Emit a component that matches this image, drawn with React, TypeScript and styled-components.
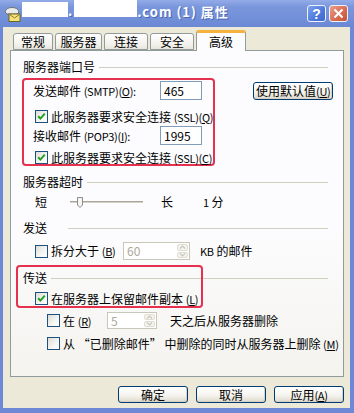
import React from 'react';
import styled, { createGlobalStyle } from 'styled-components';

const GlobalStyle = createGlobalStyle`
  html, body { margin: 0; padding: 0; background: #fff; }
  body {
    font-family: "Noto Sans CJK SC", "Noto Sans", sans-serif;
    font-size: 12px;
    color: #000;
  }
  u { text-underline-offset: 1px; }
`;

const Window = styled.div`
  width: 354px;
  height: 413px;
  display: flex;
  flex-direction: column;
  overflow: hidden;
`;

const TitleBar = styled.div`
  height: 27px;
  flex: none;
  display: flex;
  align-items: flex-start;
  padding: 0 6px 0 4px;
  box-sizing: border-box;
  background: linear-gradient(#93abe8, #7a97dc 25%, #6f8dd7 80%, #6a88d3);
`;

const TitleIcon = styled.svg`
  margin-top: 5px;
  flex: none;
`;

const Blank = styled.span<{ $w: number; $h: number; $top: number }>`
  display: block;
  width: ${p => p.$w}px;
  height: ${p => p.$h}px;
  margin-top: ${p => p.$top}px;
  margin-left: 1px;
  background: #fff;
`;

const TitleText = styled.span<{ $top?: number }>`
  margin-top: ${p => p.$top ?? 5}px;
  color: #fff;
  font-weight: bold;
  font-size: 13px;
  letter-spacing: 1px;
  line-height: 14px;
  white-space: pre;
  text-shadow: 1px 1px 0 #4a66b8;
`;

const Controls = styled.div`
  margin-left: auto;
  margin-top: 5px;
  display: flex;
  gap: 3px;
`;

const CapButton = styled.div<{ $kind: 'help' | 'close' }>`
  width: 19px;
  height: 17px;
  box-sizing: border-box;
  border: 1px solid #eef2fb;
  border-radius: 3px;
  display: flex;
  align-items: center;
  justify-content: center;
  color: #fff;
  font-family: "Liberation Sans", sans-serif;
  font-weight: bold;
  font-size: 14px;
  background: ${p =>
    p.$kind === 'help'
      ? 'linear-gradient(135deg, #7fa2ee, #4d78dc 60%, #3c66cc)'
      : 'linear-gradient(135deg, #ea9e8c, #d8694f 60%, #c65238)'};
`;

const Frame = styled.div`
  flex: 1;
  display: flex;
  flex-direction: column;
  background: #ece9d8;
  border-left: 3px solid #6c88d6;
  border-right: 4px solid #6c88d6;
  border-bottom: 5px solid #6c88d6;
`;

const TabRow = styled.div`
  height: 23px;
  display: flex;
  align-items: flex-end;
  padding-left: 10px;
`;

const Tab = styled.div<{ $w: number; $active?: boolean }>`
  width: ${p => p.$w}px;
  height: ${p => (p.$active ? 21 : 17)}px;
  box-sizing: border-box;
  margin-right: 2px;
  margin-bottom: ${p => (p.$active ? -1 : 0)}px;
  position: relative;
  z-index: ${p => (p.$active ? 2 : 0)};
  border: 1px solid #919b9c;
  border-bottom: ${p => (p.$active ? 'none' : '1px solid #919b9c')};
  border-top: ${p => (p.$active ? '3px solid #f5b33d' : '1px solid #919b9c')};
  border-radius: 3px 3px 0 0;
  background: ${p => (p.$active ? '#fcfcfe' : 'linear-gradient(#fefefe, #f2f1ec 70%, #e8e6dc)')};
  display: flex;
  align-items: center;
  justify-content: center;
  line-height: 12px;
`;

const Panel = styled.div`
  position: relative;
  margin-left: 7px;
  width: 334px;
  height: 327px;
  box-sizing: border-box;
  border: 1px solid #919b9c;
  background: linear-gradient(#fcfcfe, #fcfcfe 55%, #f4f3ee);
  padding: 10px 15px 0 12px;
  display: flex;
  flex-direction: column;
`;

const Legend = styled.div<{ $top: number; $gap?: number }>`
  display: flex;
  align-items: center;
  height: 12px;
  line-height: 12px;
  margin-top: ${p => p.$top}px;
  white-space: nowrap;
  &::after {
    content: '';
    flex: 1;
    margin-left: ${p => p.$gap ?? 4}px;
    border-top: 1px solid #d0d0bf;
  }
`;

const PortGroup = styled.div`
  display: flex;
  align-items: flex-start;
  margin-top: 5px;
`;

const Highlight = styled.div`
  margin-left: -1px;
  width: 194px;
  height: 88px;
  box-sizing: border-box;
  border: 2px solid #e5304e;
  border-radius: 4px;
  padding-left: 9px;
  display: flex;
  flex-direction: column;
`;

const Overlay = styled.div<{ $left: number; $top: number; $w: number; $h: number }>`
  position: absolute;
  left: ${p => p.$left}px;
  top: ${p => p.$top}px;
  width: ${p => p.$w}px;
  height: ${p => p.$h}px;
  box-sizing: border-box;
  border: 2px solid #e5304e;
  border-radius: 4px;
  pointer-events: none;
`;

const Row = styled.div<{ $h: number; $top: number; $indent?: number }>`
  display: flex;
  align-items: center;
  height: ${p => p.$h}px;
  margin-top: ${p => p.$top}px;
  padding-left: ${p => p.$indent ?? 0}px;
  white-space: nowrap;
  line-height: 12px;
`;

const Label = styled.span<{ $w?: number; $gap?: number }>`
  display: inline-block;
  width: ${p => (p.$w ? `${p.$w}px` : 'auto')};
  margin-left: ${p => p.$gap ?? 0}px;
  flex: none;
`;

// narrower Latin run inside Chinese labels, like the bitmap half-width glyphs
const Lat = styled.span`
  font-size: 11px;
  letter-spacing: -0.3px;
`;

const TextBox = styled.div`
  width: 42px;
  height: 19px;
  box-sizing: border-box;
  border: 1px solid #7f9db9;
  background: #fff;
  padding-left: 3px;
  display: flex;
  align-items: center;
  line-height: 12px;
`;

const Box = styled.span`
  width: 13px;
  height: 13px;
  box-sizing: border-box;
  border: 1px solid #1c5180;
  background: linear-gradient(135deg, #dcdcd7, #f6f6f3 60%, #fff);
  display: inline-flex;
  flex: none;
`;

const CheckBox = ({ checked }: { checked?: boolean }) => (
  <Box>
    {checked && (
      <svg width="11" height="11" viewBox="0 0 11 11">
        <path d="M2.2 5.2 L4.4 7.6 L8.8 2.6" fill="none" stroke="#21a121" strokeWidth="2" />
      </svg>
    )}
  </Box>
);

const XPButton = styled.div<{ $w: number; $h?: number }>`
  width: ${p => p.$w}px;
  height: ${p => p.$h ?? 17}px;
  box-sizing: border-box;
  border: 1px solid #003c74;
  border-radius: 3px;
  background: linear-gradient(#ffffff, #f5f4ef 55%, #e3dfd3 90%, #d6d0c5);
  box-shadow: inset -1px -1px 0 #d8d2c6;
  display: flex;
  align-items: center;
  justify-content: center;
  line-height: 12px;
  white-space: nowrap;
  flex: none;
`;

const DefaultButton = styled(XPButton)`
  margin-left: 38px;
  margin-top: 4px;
`;

const SpinBox = styled.div<{ $w: number; $h: number }>`
  width: ${p => p.$w}px;
  height: ${p => p.$h}px;
  box-sizing: border-box;
  border: 1px solid #c9c7ba;
  background: #fff;
  display: flex;
  align-items: stretch;
  color: #aca899;
  flex: none;
`;

const SpinValue = styled.span`
  flex: 1;
  padding-left: 3px;
  display: flex;
  align-items: center;
`;

const SpinArrows = styled.span`
  width: 13px;
  display: flex;
  flex-direction: column;
  gap: 1px;
  padding: 1px;
  box-sizing: border-box;
`;

const SpinHalf = styled.span`
  flex: 1;
  border: 1px solid #e0ddd2;
  border-radius: 2px;
  background: #f4f3ee;
  display: flex;
  align-items: center;
  justify-content: center;
`;

const Spin = ({ value, w, h }: { value: string; w: number; h: number }) => (
  <SpinBox $w={w} $h={h}>
    <SpinValue>{value}</SpinValue>
    <SpinArrows>
      <SpinHalf>
        <svg width="7" height="4" viewBox="0 0 7 4">
          <path d="M1 3.5 L3.5 1 L6 3.5" fill="none" stroke="#c9c7ba" strokeWidth="1.2" />
        </svg>
      </SpinHalf>
      <SpinHalf>
        <svg width="7" height="4" viewBox="0 0 7 4">
          <path d="M1 0.5 L3.5 3 L6 0.5" fill="none" stroke="#c9c7ba" strokeWidth="1.2" />
        </svg>
      </SpinHalf>
    </SpinArrows>
  </SpinBox>
);

const Slider = styled.svg`
  margin-left: 23px;
  flex: none;
`;

const ButtonBar = styled.div`
  display: flex;
  justify-content: flex-end;
  gap: 8px;
  padding: 9px 6px 0 0;
`;

const App = () => {
  return (
    <>
      <GlobalStyle />
      <Window>
        <TitleBar>
          <TitleIcon width="17" height="17" viewBox="0 0 17 17">
            <path d="M1 7 Q2 2.5 8 2.5 Q14 2.5 15 7 L13 9 L3 9 Z" fill="#e9ebea" stroke="#6b7377" strokeWidth="1" />
            <rect x="5" y="9" width="11" height="7.5" fill="#f4e27a" stroke="#6e6524" strokeWidth="1" />
            <path d="M5.5 9.5 L10.5 13 L15.5 9.5" fill="none" stroke="#8e7e2e" strokeWidth="1" />
          </TitleIcon>
          <Blank $w={46} $h={15} $top={2} />
          <TitleText $top={4}>.</TitleText>
          <Blank $w={63} $h={17} $top={0} />
          <TitleText>.com (1) 属性</TitleText>
          <Controls>
            <CapButton $kind="help">?</CapButton>
            <CapButton $kind="close">
              <svg width="11" height="11" viewBox="0 0 11 11">
                <path d="M1.5 1.5 L9.5 9.5 M9.5 1.5 L1.5 9.5" stroke="#fff" strokeWidth="2" />
              </svg>
            </CapButton>
          </Controls>
        </TitleBar>

        <Frame>
          <TabRow>
            <Tab $w={40}>常规</Tab>
            <Tab $w={47}>服务器</Tab>
            <Tab $w={44}>连接</Tab>
            <Tab $w={44}>安全</Tab>
            <Tab $w={50} $active>高级</Tab>
          </TabRow>

          <Panel>
            <Legend $top={0}>服务器端口号</Legend>
            <PortGroup>
              <Highlight>
                <Row $h={19} $top={1}>
                  <Label $w={127}>发送邮件 <Lat>(SMTP)(<u>O</u>):</Lat></Label>
                  <TextBox>465</TextBox>
                </Row>
                <Row $h={13} $top={10} $indent={2}>
                  <CheckBox checked />
                  <Label $gap={3}>此服务器要求安全连接 <Lat>(SSL)(<u>Q</u>)</Lat></Label>
                </Row>
                <Row $h={19} $top={3}>
                  <Label $w={127}>接收邮件 <Lat>(POP3)(<u>I</u>):</Lat></Label>
                  <TextBox>1995</TextBox>
                </Row>
                <Row $h={13} $top={6} $indent={2}>
                  <CheckBox checked />
                  <Label $gap={3}>此服务器要求安全连接 <Lat>(SSL)(<u>C</u>)</Lat></Label>
                </Row>
              </Highlight>
              <DefaultButton $w={80} $h={18}>使用默认值<Lat>(<u>U</u>)</Lat></DefaultButton>
            </PortGroup>

            <Legend $top={10}>服务器超时</Legend>
            <Row $h={20} $top={4} $indent={12}>
              <Label>短</Label>
              <Slider width="74" height="20" viewBox="0 0 74 20">
                <rect x="0" y="9" width="73" height="2" fill="#d4d0c8" />
                <rect x="0" y="9" width="73" height="1" fill="#a8a69c" />
                <rect x="0" y="11" width="73" height="1" fill="#fff" />
                <path d="M7.5 5.5 H12.5 V13 L10 15.5 L7.5 13 Z" fill="#f6f6f2" stroke="#8c8a80" strokeWidth="1" />
              </Slider>
              <Label $gap={17}>长</Label>
              <Label $gap={30}><Lat>1</Lat> 分</Label>
            </Row>

            <Legend $top={10} $gap={21}>发送</Legend>
            <Row $h={20} $top={7} $indent={12}>
              <CheckBox />
              <Label $gap={3} $w={72}>拆分大于 <Lat>(<u>B</u>)</Lat></Label>
              <Spin value="60" w={67} h={18} />
              <Label $gap={10}><Lat>KB</Lat> 的邮件</Label>
            </Row>

            <Legend $top={11}>传送</Legend>
            <Row $h={13} $top={8} $indent={12}>
              <CheckBox checked />
              <Label $gap={3}>在服务器上保留邮件副本 <Lat>(<u>L</u>)</Lat></Label>
            </Row>
            <Row $h={17} $top={7} $indent={24}>
              <CheckBox />
              <Label $gap={3} $w={44}>在 <Lat>(<u>R</u>)</Lat></Label>
              <Spin value="5" w={50} h={17} />
              <Label $gap={13}>天之后从服务器删除</Label>
            </Row>
            <Row $h={13} $top={8} $indent={24}>
              <CheckBox />
              <Label $gap={3}>从 “已删除邮件” 中删除的同时从服务器上删除 <Lat>(<u>M</u>)</Lat></Label>
            </Row>

            <Overlay $left={5} $top={214} $w={187} $h={43} />
          </Panel>

          <ButtonBar>
            <XPButton $w={70}>确定</XPButton>
            <XPButton $w={70}>取消</XPButton>
            <XPButton $w={70}>应用<Lat>(<u>A</u>)</Lat></XPButton>
          </ButtonBar>
        </Frame>
      </Window>
    </>
  );
};

export default App;
